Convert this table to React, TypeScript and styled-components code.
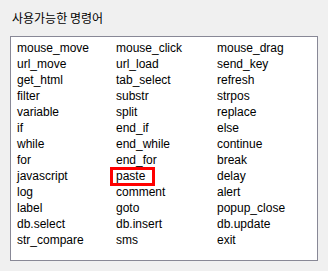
import styled, { createGlobalStyle } from "styled-components";

const commands: string[][] = [
  ["mouse_move", "mouse_click", "mouse_drag"],
  ["url_move", "url_load", "send_key"],
  ["get_html", "tab_select", "refresh"],
  ["filter", "substr", "strpos"],
  ["variable", "split", "replace"],
  ["if", "end_if", "else"],
  ["while", "end_while", "continue"],
  ["for", "end_for", "break"],
  ["javascript", "paste", "delay"],
  ["log", "comment", "alert"],
  ["label", "goto", "popup_close"],
  ["db.select", "db.insert", "db.update"],
  ["str_compare", "sms", "exit"],
];

const selected = "paste";

const GlobalStyle = createGlobalStyle`
  html, body {
    margin: 0;
    padding: 0;
    background: #f0f0f0;
  }
  body {
    font-family: "Liberation Sans", "Noto Sans CJK KR", sans-serif;
    font-size: 12px;
    color: #000;
  }
`;

const Panel = styled.div`
  width: 328px;
  height: 271px;
  box-sizing: border-box;
  padding: 10px 10px 0 10px;
  display: flex;
  flex-direction: column;
`;

const Title = styled.div`
  font-family: "Noto Sans CJK KR", sans-serif;
  font-size: 12px;
  line-height: 16px;
  height: 16px;
  padding-left: 2px;
  margin-bottom: 10px;
`;

const CommandBox = styled.div`
  width: 308px;
  height: 225px;
  box-sizing: border-box;
  border: 1px solid #888896;
  background: #fff;
  padding: 3px 0 0 6px;
`;

const CommandGrid = styled.div`
  display: grid;
  grid-template-columns: 99px 101px 1fr;
  grid-auto-rows: 16px;
`;

const Command = styled.div<{ $active?: boolean }>`
  line-height: 16px;
  white-space: nowrap;

  span {
    position: relative;
    display: inline-block;
    vertical-align: top;
    height: 16px;
  }

  /* red marker frame around the highlighted command */
  ${({ $active }) =>
    $active &&
    `
    span::after {
      content: "";
      position: absolute;
      top: -1px;
      bottom: -2px;
      left: -6px;
      right: -10px;
      border: 3px solid #ff0000;
    }
  `}
`;

export default function App() {
  return (
    <>
      <GlobalStyle />
      <Panel>
        <Title>사용가능한 명령어</Title>
        <CommandBox>
          <CommandGrid>
            {commands.flat().map((name) => (
              <Command key={name} $active={name === selected}>
                <span>{name}</span>
              </Command>
            ))}
          </CommandGrid>
        </CommandBox>
      </Panel>
    </>
  );
}
